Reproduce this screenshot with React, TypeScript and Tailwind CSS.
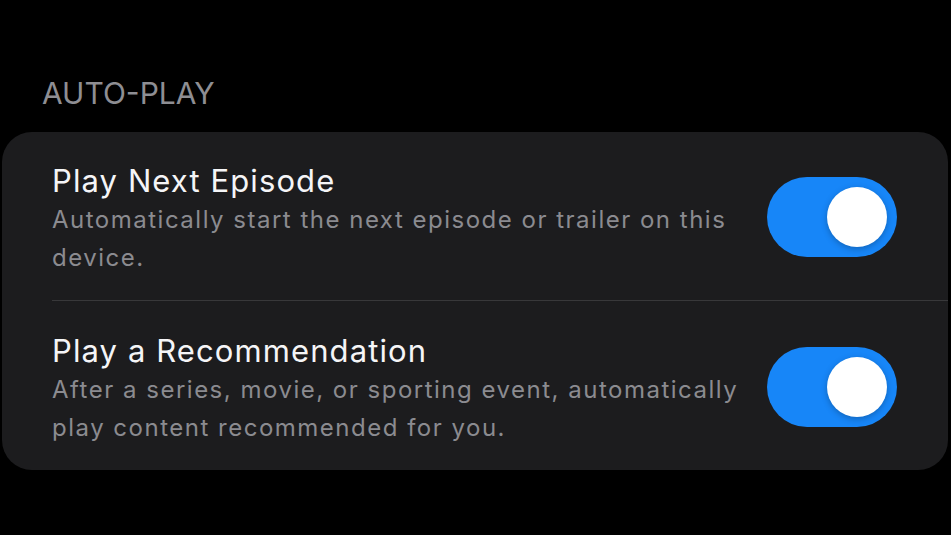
const rows = [
  {
    title: "Play Next Episode",
    detail: "Automatically start the next episode or trailer on this device.",
    on: true,
  },
  {
    title: "Play a Recommendation",
    detail: "After a series, movie, or sporting event, automatically play content recommended for you.",
    on: true,
  },
];

function Toggle({ on }: { on: boolean }) {
  return (
    <div
      className={`flex h-[80px] w-[130px] shrink-0 items-center rounded-full px-[10px] ${
        on ? "justify-end bg-[#1786f8]" : "justify-start bg-[#39393d]"
      }`}
    >
      <div className="h-[60px] w-[60px] rounded-full bg-white shadow-[0_2px_6px_rgba(0,0,0,0.25)]" />
    </div>
  );
}

export default function App() {
  return (
    <div className="min-h-[535px] w-full bg-black pt-[75px] font-['Inter',sans-serif]">
      <div className="pl-[42px] text-[30px] leading-[36px] text-[#8e8e93]">AUTO-PLAY</div>

      {/* grouped settings card */}
      <div className="mt-[21px] ml-[2px] mr-[3px] rounded-[30px] bg-[#1c1c1e] pl-[50px]">
        {rows.map((row, i) => (
          <div key={row.title} className={i > 0 ? "border-t border-[#38383a]" : ""}>
            <div className="flex pr-[51px]">
              <div className={`w-[700px] ${i > 0 ? "pt-[32px]" : "pt-[31px]"} pb-[23px]`}>
                <div className="text-[31px] leading-[36px] tracking-[1.1px] text-[#f5f5f7]">{row.title}</div>
                <div className="mt-[2px] text-[24px] leading-[38px] tracking-[1.5px] text-[#8b8b90]">{row.detail}</div>
              </div>
              <div className="ml-auto flex items-center pt-[2px]">
                <Toggle on={row.on} />
              </div>
            </div>
          </div>
        ))}
      </div>
    </div>
  );
}
